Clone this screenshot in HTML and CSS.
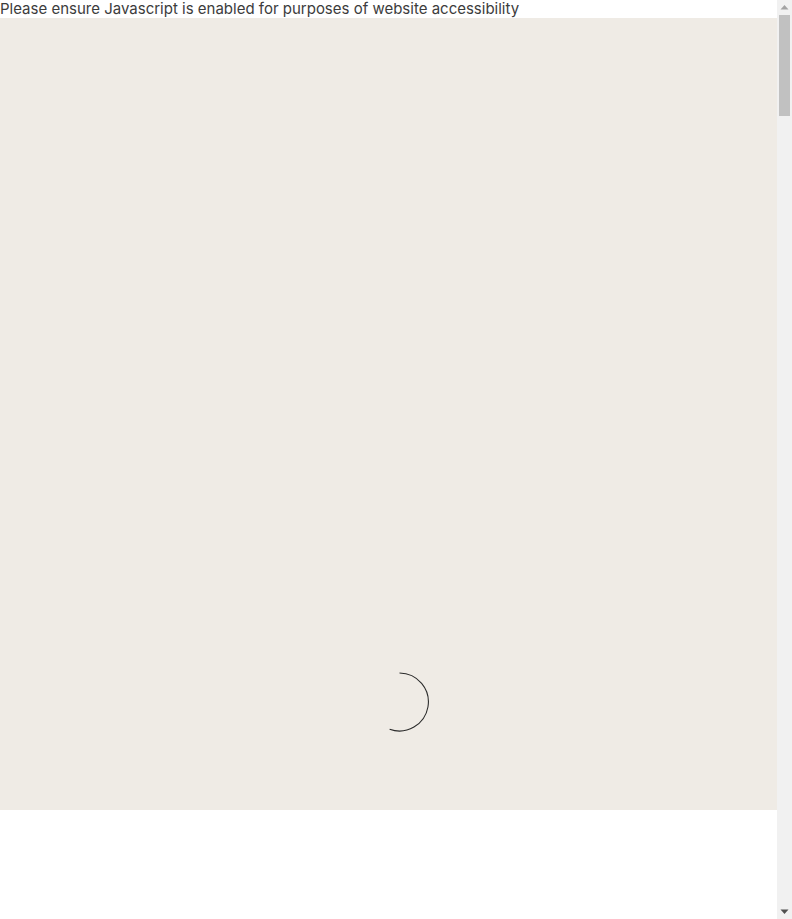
FILE: index.html
```html
<!DOCTYPE html>
<html lang="en">
<head>
<meta charset="utf-8">
<title>Loading</title>
<link rel="stylesheet" href="styles.css">
</head>
<body>
<div class="viewport">
  <div class="page">
    <div class="a11y-note">Please ensure Javascript is enabled for purposes of website accessibility</div>
    <main class="loader-screen">
      <svg class="spinner" width="62" height="62" viewBox="0 0 62 62" aria-label="Loading">
        <path d="M30.5 2 A29 29 0 1 1 20.6 58.3" fill="none" stroke="#2b2b2b" stroke-width="1.1"/>
      </svg>
    </main>
  </div>
  <div class="scrollbar" aria-hidden="true">
    <div class="sb-button">
      <svg width="9" height="5" viewBox="0 0 9 5"><polygon points="4.5,0 8.5,4.5 0.5,4.5" fill="#a3a3a3"/></svg>
    </div>
    <div class="sb-track"><div class="sb-thumb"></div></div>
    <div class="sb-button">
      <svg width="9" height="5" viewBox="0 0 9 5"><polygon points="0.5,0.5 8.5,0.5 4.5,5" fill="#505050"/></svg>
    </div>
  </div>
</div>
</body>
</html>
```
FILE: styles.css
```css
html, body {
  margin: 0;
  padding: 0;
  background: #ffffff;
}
.viewport {
  display: flex;
  height: 919px;
  overflow: hidden;
}
.page {
  flex: 1;
  min-width: 0;
}
.a11y-note {
  font-family: "Inter", "Liberation Sans", sans-serif;
  font-size: 15px;
  line-height: 18px;
  color: #3c3c3c;
  white-space: nowrap;
}
.loader-screen {
  height: 792px;
  background: #efebe5;
  box-sizing: border-box;
  padding: 653px 0 0 369px;
}
.spinner {
  display: block;
}
.scrollbar {
  width: 15px;
  flex: none;
  background: #f1f1f1;
  display: flex;
  flex-direction: column;
}
.sb-button {
  height: 15px;
  flex: none;
  display: flex;
  align-items: center;
  justify-content: center;
}
.sb-button svg {
  display: block;
}
.sb-track {
  flex: 1;
  padding: 0 2px;
}
.sb-thumb {
  height: 101px;
  background: #c1c1c1;
}
```
